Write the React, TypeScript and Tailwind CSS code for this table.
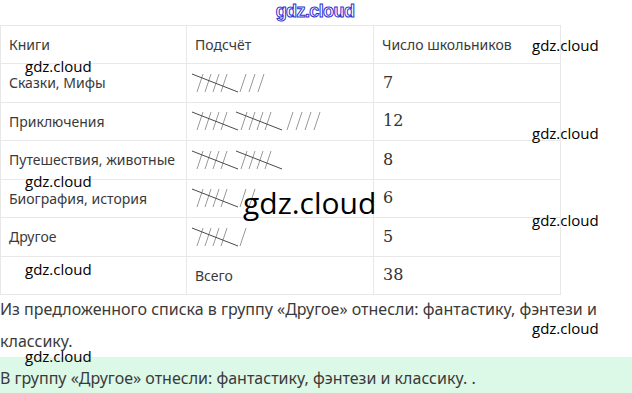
import React from "react";

function Tally({ groups, singles }: { groups: number; singles: number }) {
  const items: React.ReactNode[] = [];
  for (let g = 0; g < groups; g++) {
    const ox = g * 44;
    for (let i = 0; i < 4; i++) {
      items.push(
        <line key={`g${g}s${i}`} x1={ox + 5 + 8 * i} y1={19} x2={ox + 11 + 8 * i} y2={1} stroke="#9a9a9a" strokeWidth={1} />
      );
    }
    items.push(<line key={`g${g}d`} x1={ox} y1={1} x2={ox + 46} y2={19} stroke="#4a4a4a" strokeWidth={1} />);
  }
  const start = groups * 44 + (groups > 1 ? 7 : 4);
  for (let i = 0; i < singles; i++) {
    items.push(
      <line key={`s${i}`} x1={start + 9 * i} y1={19} x2={start + 9 * i + 6} y2={1} stroke="#9a9a9a" strokeWidth={1} />
    );
  }
  return (
    <svg width="150" height="20" viewBox="0 0 150 20" className="block ml-[-3px]">
      {items}
    </svg>
  );
}

const rows: { name: string; g: number; s: number; n: string }[] = [
  { name: "Сказки, Мифы", g: 1, s: 3, n: "7" },
  { name: "Приключения", g: 2, s: 4, n: "12" },
  { name: "Путешествия, животные", g: 2, s: 0, n: "8" },
  { name: "Биография, история", g: 1, s: 2, n: "6" },
  { name: "Другое", g: 1, s: 1, n: "5" },
];

const wm = "absolute text-black text-[15px] leading-none [font-family:'Open_Sans',sans-serif]";
const cell = "border border-[#e8e8e8] pl-[8px] align-middle";
const num = "border border-[#e8e8e8] pl-[9px] align-middle text-[16px] [font-family:'DejaVu_Serif','Liberation_Serif',serif] text-[#333]";

export default function App() {
  return (
    <div className="relative w-[632px] h-[393px] overflow-hidden bg-white [font-family:'Noto_Sans',sans-serif] text-[#3a3a3a]">
      <div className="h-[25px] flex justify-center">
        <span className="mt-[1px] ml-[-2px] text-[18px] leading-[20px] font-bold text-transparent [-webkit-text-stroke:1px_#3030d0] [font-family:'Liberation_Sans',sans-serif] tracking-[-0.6px]">
          gdz.cloud
        </span>
      </div>
      <table className="border-collapse table-fixed w-[560px] text-[14px]">
        <colgroup>
          <col className="w-[186px]" />
          <col className="w-[187px]" />
          <col className="w-[187px]" />
        </colgroup>
        <tbody>
          <tr className="h-[38px]">
            <td className={cell}>Книги</td>
            <td className={cell}>Подсчёт</td>
            <td className={cell}>Число школьников</td>
          </tr>
          {rows.map((r) => (
            <tr key={r.name} className="h-[38.5px]">
              <td className={cell}>{r.name}</td>
              <td className={cell}>
                <Tally groups={r.g} singles={r.s} />
              </td>
              <td className={num}>{r.n}</td>
            </tr>
          ))}
          <tr className="h-[38.5px]">
            <td className={cell}></td>
            <td className={cell}>Всего</td>
            <td className={num}>38</td>
          </tr>
        </tbody>
      </table>
      <p className="text-[16px] leading-[32px] mt-[-2px]">
        Из предложенного списка в группу «Другое» отнесли: фантастику, фэнтези и классику.
      </p>
      <div className="bg-[#dcf8e6] h-[40px] text-[16px] leading-[22px] pt-[10px]">
        В группу «Другое» отнесли: фантастику, фэнтези и классику. .
      </div>

      <span className={`${wm} left-[25px] top-[59px]`}>gdz.cloud</span>
      <span className={`${wm} left-[532px] top-[38px]`}>gdz.cloud</span>
      <span className={`${wm} left-[532px] top-[126px]`}>gdz.cloud</span>
      <span className={`${wm} left-[25px] top-[174px]`}>gdz.cloud</span>
      <span className="absolute left-[243px] top-[188px] text-black text-[30px] leading-none [font-family:'Open_Sans',sans-serif] font-medium">
        gdz.cloud
      </span>
      <span className={`${wm} left-[532px] top-[213px]`}>gdz.cloud</span>
      <span className={`${wm} left-[25px] top-[262px]`}>gdz.cloud</span>
      <span className={`${wm} left-[532px] top-[321px]`}>gdz.cloud</span>
      <span className={`${wm} left-[25px] top-[349px]`}>gdz.cloud</span>
    </div>
  );
}
